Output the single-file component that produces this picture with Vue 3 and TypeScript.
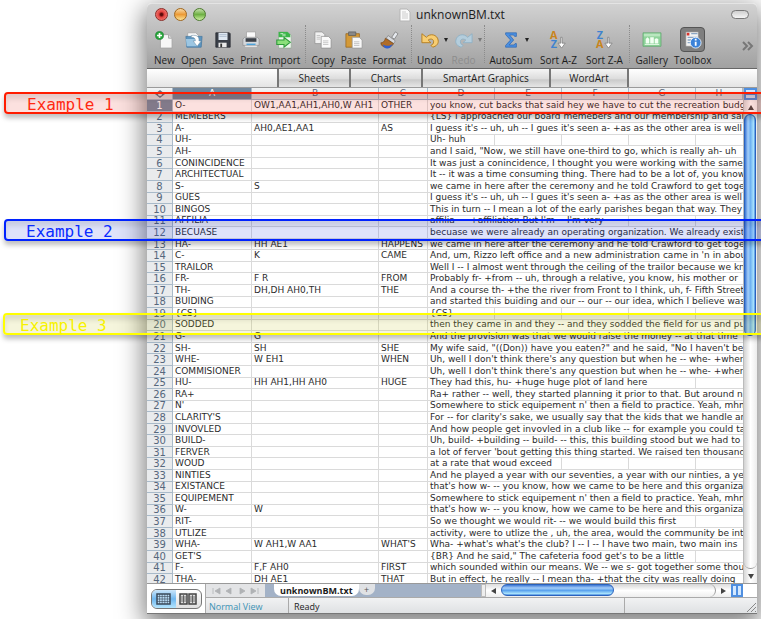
<script setup lang="ts">
interface Tool {
  name: string
  icon: string
  menu?: boolean
  disabled?: boolean
  pressed?: boolean
  roomy?: boolean
}

interface Row {
  n: number
  a: string
  b: string
  c: string
  text: string
  span: number
}

const icons: Record<string, string> = {
  new: '<path d="M6 4h9l4 4v11H6z" fill="#f6f6f6" stroke="#a4a4a4"/><path d="M15 4v4h4" fill="#ddd" stroke="#a4a4a4"/><circle cx="5" cy="5" r="4.500" fill="#27a53a" stroke="#14772a" stroke-width=".6"/><path d="M5 2.200v5.600M2.200 5h5.600" stroke="#fff" stroke-width="1.800"/>',
  open: '<path d="M3 5V2h9l3 3v3H3z" fill="#f7f7f7" stroke="#999" stroke-width=".7"/><path d="M1 6h18l-1 12H2z" fill="#5d95bf" stroke="#44779f" stroke-width=".8"/><path d="M1 9h12l1 8H2z" fill="#9cc6e2"/><path d="M7 5c7-1 9 2 8.500 6H18l-4.500 6L9 11h2.500c0-3-1.500-4-4.500-4z" fill="#fff" stroke="#6b8ba3" stroke-width=".6"/>',
  save: '<path d="M2 2h15l1 1v15H2z" fill="#3a3f48" stroke="#23262c" stroke-width=".8"/><path d="M5 2h10v8H5z" fill="#dfe8f2"/><path d="M6 4h8M6 6h8" stroke="#9fb0c4" stroke-width=".8"/><path d="M5 13h9v5H5z" fill="#e9e9e9"/><path d="M7 14h2v4H7z" fill="#333"/>',
  print: '<path d="M5 1h10v9H5z" fill="#fafafa" stroke="#999" stroke-width=".7"/><path d="M1 9l2-2h14l2 2v7H1z" fill="#d5d8db" stroke="#888" stroke-width=".7"/><path d="M4 8h12v4H4z" fill="#3c4148"/><path d="M5 14h10v2H5z" fill="#4aa3dd"/><path d="M3 16h14v2H3z" fill="#f2f2f2" stroke="#999" stroke-width=".5"/>',
  import: '<path d="M4 1h10l4 4v14H4z" fill="#eef8ee" stroke="#8fa890" stroke-width=".7"/><path d="M4 1h10l3 3v3H4z" fill="#3cb54a"/><path d="M6 3h3v3M11 3v3" stroke="#dff5df" fill="none"/><path d="M2 10h8V7l7 5.500-7 5.500v-3H2z" fill="#8be07a" stroke="#2f9a3c" stroke-width="1.200"/>',
  copy: '<path d="M1 1h8l3 3v10H1z" fill="#f1f1f1" stroke="#8e8e8e" stroke-width=".8"/><path d="M8 6h8l3 3v10H8z" fill="#fafafa" stroke="#8e8e8e" stroke-width=".8"/><path d="M3 5h4M3 7h4M3 9h4M10 11h6M10 13h6M10 15h6" stroke="#b5b5b5" stroke-width=".8"/>',
  paste: '<path d="M1 3h15v15H1z" fill="#d49a38" stroke="#97631a" stroke-width=".8"/><path d="M4 1h8v4H4z" fill="#888" stroke="#555" stroke-width=".7"/><path d="M8 7h8l3 3v9H8z" fill="#f8f8f8" stroke="#949494" stroke-width=".8"/><path d="M10 12h6M10 14h6M10 16h6" stroke="#b0b0b0" stroke-width=".8"/>',
  format: '<path d="M13 7l4-6 3 2-4 6z" fill="#e6e9ee" stroke="#777" stroke-width=".8"/><path d="M9 5l8 6-2 3-8-6z" fill="#d6d9de" stroke="#777" stroke-width=".7"/><path d="M6 8l9 6c-2 4-7 6-12 3-1-1-2-2-2-4 2 0 4-1 5-5z" fill="#b06d28" stroke="#6e3f12" stroke-width=".7"/><path d="M3 15c4 2 8 2 11-.5-1 3-3 5-6 5s-4-2-5-4.500z" fill="#2f5fd0"/>',
  undo: '<path d="M1 3v10h10l-3-3c3-2 6-1 6 2 0 2-1 3-3 4l2 2c4-1 7-4 6-8-1-6-9-8-13-3z" fill="#f7cd72" stroke="#b27a1c" stroke-width="1"/>',
  redo: '<path d="M19 3v10H9l3-3c-3-2-6-1-6 2 0 2 1 3 3 4l-2 2c-4-1-7-4-6-8 1-6 9-8 13-3z" fill="#b4cddc" stroke="#8fb0c4" stroke-width="1"/>',
  sum: '<path d="M4 2h12v4h-2l-1-1.500H8.500l4.500 5.500-5 5.500h5.500L14.500 14H16v4H4v-2l5.500-6L4 4z" fill="#4b8fe0" stroke="#2560ad" stroke-width=".7"/>',
  az: '<text x="1" y="9" fill="#c9841c">A</text><text x="2" y="19" fill="#3f82cf">Z</text><path d="M14.500 7v6.500H18L14 19l-4-5.500h3V7z" fill="#fff" stroke="#777" stroke-width=".8"/>',
  za: '<text x="2" y="9" fill="#3f82cf">Z</text><text x="1" y="19" fill="#c9841c">A</text><path d="M15.500 7v6.500H19L15 19l-4-5.500h3V7z" fill="#fff" stroke="#777" stroke-width=".8"/>',
  gallery: '<path d="M0 2h20v15H0z" fill="#8ed39a" stroke="#5da66b" stroke-width=".8"/><path d="M1 3h18v3H1z" fill="#b9e6bf"/><path d="M3 9l2-2 2 2v5H3zM8 7h4v7H8zM13 9l2-1 2 1v5h-4z" fill="#f2fff2"/><path d="M2 15h16" stroke="#e6f8e6"/>',
  toolbox: '<path d="M2 1h14v16H2z" fill="#f3f3f3" stroke="#888" stroke-width=".7"/><path d="M3 2h3v3H3z" fill="#d8342c"/><path d="M8 3h7M4 7h11M4 10h5M4 13h4" stroke="#8aa6c4" stroke-width="1.400"/><circle cx="13" cy="13" r="6" fill="#3b82d8" stroke="#e9f2fc"/><path d="M13 12v4.500M13 8.700v1.800" stroke="#fff" stroke-width="2"/>'
}

const groups: Tool[][] = [
  [
    { name: 'New', icon: 'new' },
    { name: 'Open', icon: 'open' },
    { name: 'Save', icon: 'save' },
    { name: 'Print', icon: 'print' },
    { name: 'Import', icon: 'import' }
  ],
  [
    { name: 'Copy', icon: 'copy' },
    { name: 'Paste', icon: 'paste' },
    { name: 'Format', icon: 'format' }
  ],
  [
    { name: 'Undo', icon: 'undo', menu: true },
    { name: 'Redo', icon: 'redo', menu: true, disabled: true }
  ],
  [
    { name: 'AutoSum', icon: 'sum', menu: true },
    { name: 'Sort A-Z', icon: 'az', roomy: true },
    { name: 'Sort Z-A', icon: 'za', roomy: true }
  ],
  [
    { name: 'Gallery', icon: 'gallery' },
    { name: 'Toolbox', icon: 'toolbox', pressed: true }
  ]
]

const columns = ['A', 'B', 'C', 'D', 'E', 'F', 'G', 'H']

// Word, pronunciation, replacement, sentence, and how many columns the sentence spills over.
const source: [string, string, string, string, number?][] = [
  ['O-', 'OW1,AA1,AH1,AH0,W AH1', 'OTHER', 'you know, cut backs that said hey we have to cut the recreation budget'],
  ['MEMEBERS', '', '', '{LS} I approached our board memebers and our membership and said'],
  ['A-', 'AH0,AE1,AA1', 'AS', "I guess it's -- uh, uh -- I gues it's seen a- +as as the other area is well"],
  ['UH-', '', '', 'Uh- huh', 1],
  ['AH-', '', '', 'and I said, "Now, we still have one-third to go, which is really ah- uh'],
  ['CONINCIDENCE', '', '', 'It was just a conincidence, I thought you were working with the same'],
  ['ARCHITECTUAL', '', '', 'It -- it was a time consuming thing. There had to be a lot of, you know'],
  ['S-', 'S', '', 'we came in here after the ceremony and he told Crawford to get together'],
  ['GUES', '', '', "I guess it's -- uh, uh -- I gues it's seen a- +as as the other area is well"],
  ['BINGOS', '', '', 'This in turn -- I mean a lot of the early parishes began that way. They'],
  ['AFFILIA', '', '', "affilia- -- +affiliation But I'm -- I'm very", 3],
  ['BECUASE', '', '', 'becuase we were already an operating organization. We already existed'],
  ['HA-', 'HH AE1', 'HAPPENS', 'we came in here after the ceremony and he told Crawford to get together'],
  ['C-', 'K', 'CAME', "And, um, Rizzo left office and a new administration came in 'n in about"],
  ['TRAILOR', '', '', 'Well I -- I almost went through the ceiling of the trailor because we knew'],
  ['FR-', 'F R', 'FROM', 'Probably fr- +from -- uh, through a relative, you know, his mother or'],
  ['TH-', 'DH,DH AH0,TH', 'THE', 'And a course th- +the the river from Front to I think, uh, f- Fifth Street'],
  ['BUIDING', '', '', 'and started this buiding and our -- our -- our idea, which I believe was'],
  ['{CS}', '', '', '{CS}', 1],
  ['SODDED', '', '', 'then they came in and they -- and they sodded the field for us and put'],
  ['G-', 'G', '', 'And the provision was that we would raise the money -- at that time'],
  ['SH-', 'SH', 'SHE', 'My wife said, "((Don)) have you eaten?" and he said, "No I haven\'t been'],
  ['WHE-', 'W EH1', 'WHEN', "Uh, well I don't think there's any question but when he -- whe- +when"],
  ['COMMISIONER', '', '', "Uh, well I don't think there's any question but when he -- whe- +when"],
  ['HU-', 'HH AH1,HH AH0', 'HUGE', 'They had this, hu- +huge huge plot of land here', 4],
  ['RA+', '', '', 'Ra+ rather -- well, they started planning it prior to that. But around nine'],
  ["N'", '', '', "Somewhere to stick equipement n' then a field to practice. Yeah, mhm"],
  ["CLARITY'S", '', '', "For -- for clarity's sake, we usually say that the kids that we handle are"],
  ['INVOVLED', '', '', 'And how people get invovled in a club like -- for example you could take'],
  ['BUILD-', '', '', 'Uh, build- +building -- build- -- this, this building stood but we had to'],
  ['FERVER', '', '', "a lot of ferver 'bout getting this thing started. We raised ten thousand"],
  ['WOUD', '', '', 'at a rate that woud exceed', 2],
  ['NINTIES', '', '', 'And he played a year with our seventies, a year with our ninties, a year'],
  ['EXISTANCE', '', '', "that's how w- -- you know, how we came to be here and this organization"],
  ['EQUIPEMENT', '', '', "Somewhere to stick equipement n' then a field to practice. Yeah, mhm"],
  ['W-', 'W', '', "that's how w- -- you know, how we came to be here and this organization"],
  ['RIT-', '', '', 'So we thought we would rit- -- we would build this first', 4],
  ['UTLIZE', '', '', 'activity, were to utlize the , uh, the area, would the community be into'],
  ['WHA-', 'W AH1,W AA1', "WHAT'S", "Wha- +what's what's the club? I -- I -- I have two main, two main ins"],
  ["GET'S", '', '', '{BR} And he said," The cafeteria food get\'s to be a little', 4],
  ['F-', 'F,F AH0', 'FIRST', 'which sounded within our means. We -- we s- got together some thou'],
  ['THA-', 'DH AE1', 'THAT', 'But in effect, he really -- I mean tha- +that the city was really doing']
]

const rows: Row[] = source.map(([a, b, c, text, span], i) => ({ n: i + 1, a, b, c, text, span: span ?? 5 }))

const notes = [
  { label: 'Example 1', kind: 'red' },
  { label: 'Example 2', kind: 'blue' },
  { label: 'Example 3', kind: 'yellow' }
]
</script>

<template>
  <main class="page">
    <section class="window">
      <header class="chrome">
        <div class="titlebar">
          <div class="lights">
            <button class="light close" aria-label="Close"></button>
            <button class="light minimise" aria-label="Minimise"></button>
            <button class="light grow" aria-label="Zoom"></button>
          </div>
          <h1 class="title">
            <svg width="12" height="14" viewBox="0 0 12 14"><path d="M1 1h7l3 3v9H1z" fill="#fafafa" stroke="#b5b5b5" /><path d="M3 4h4M3 6h6M3 8h6M3 10h6" stroke="#ccc" /></svg>
            unknownBM.txt
          </h1>
          <button class="pill" aria-label="Toggle toolbar"></button>
        </div>
        <nav class="toolbar">
          <template v-for="(group, g) in groups" :key="g">
            <span v-if="g" class="rule"></span>
            <button
              v-for="tool in group"
              :key="tool.name"
              class="tool"
              :class="{ dropdown: tool.menu && tool.name !== 'AutoSum', off: tool.disabled, roomy: tool.roomy }"
              :disabled="tool.disabled"
            >
              <span class="glyph" :class="{ pressed: tool.pressed }">
                <svg width="20" height="20" viewBox="0 0 20 20" v-html="icons[tool.icon]"></svg>
                <i v-if="tool.menu" class="caret"></i>
              </span>
              {{ tool.name }}
            </button>
          </template>
          <button class="more" aria-label="More tools">
            <svg width="12" height="10" viewBox="0 0 12 10"><path d="M1 1l4 4-4 4M6 1l4 4-4 4" fill="none" stroke="#777" stroke-width="2" /></svg>
          </button>
        </nav>
      </header>

      <nav class="elements">
        <button>Sheets</button>
        <button>Charts</button>
        <button class="wide">SmartArt Graphics</button>
        <button>WordArt</button>
      </nav>

      <div class="body">
        <div class="sheet">
          <table>
            <colgroup>
              <col class="w-num" /><col class="w-a" /><col class="w-b" /><col class="w-c" />
              <col class="w-d" /><col class="w-d" /><col class="w-d" /><col class="w-d" /><col />
            </colgroup>
            <thead>
              <tr>
                <th class="corner"><svg width="12" height="8" viewBox="0 0 12 8"><path d="M1 4l5-4 5 4-5 4z" fill="#657487" /><circle cx="6" cy="4" r="2" fill="#e9ebed" /></svg></th>
                <th v-for="col in columns" :key="col" :class="{ picked: col === 'A' }">{{ col }}</th>
              </tr>
            </thead>
            <tbody>
              <tr v-for="row in rows" :key="row.n">
                <th :class="{ picked: row.n === 1 }">{{ row.n }}</th>
                <td>{{ row.a }}</td>
                <td>{{ row.b }}</td>
                <td>{{ row.c }}</td>
                <td :colspan="row.span">{{ row.text }}</td>
                <td v-for="k in 5 - row.span" :key="k"></td>
              </tr>
            </tbody>
          </table>
        </div>
        <div class="vscroll">
          <span class="split"></span>
          <button class="arrow" aria-label="Scroll up"><i class="tri up"></i></button>
          <div class="vtrack"><span class="vthumb"></span></div>
          <button class="arrow" aria-label="Scroll down"><i class="tri down"></i></button>
        </div>
      </div>

      <footer class="foot">
        <div class="views">
          <div class="switch">
            <button class="on" aria-label="Normal view">
              <svg width="15" height="12" viewBox="0 0 15 12"><path d="M1 1h13v10H1z" fill="#b9dcf5" stroke="#3b4a5a" stroke-width="1.500" /><path d="M1 3.500h13M1 6h13M1 8.500h13M3.600 1v10M6.200 1v10M8.800 1v10M11.400 1v10" stroke="#3b4a5a" stroke-width=".6" /></svg>
            </button>
            <button aria-label="Page layout view">
              <svg width="18" height="12" viewBox="0 0 18 12"><path d="M1 1h7v10H1zM10 1h7v10h-7z" fill="#ddd" stroke="#444" stroke-width="1.500" /><path d="M2 4h5M2 6h5M2 8h5M11 4h5M11 6h5M11 8h5M4.500 2v8M13.500 2v8" stroke="#444" stroke-width=".7" /></svg>
            </button>
          </div>
        </div>
        <div class="bars">
          <div class="tabs">
            <div class="steps">
              <svg width="48" height="8" viewBox="0 0 48 8"><path d="M1 1v6M8 1v6L3 4zM19 1v6l-5-3zM28 1v6l5-3zM39 1v6l5-3zM46 1v6" fill="#b0b2b5" stroke="#b0b2b5" stroke-width=".8" /></svg>
            </div>
            <div class="tabstrip">
              <button class="tab">unknownBM.txt</button>
              <button class="add" aria-label="Add sheet">+</button>
            </div>
            <span class="grip"></span>
            <div class="hscroll">
              <i class="tri left"></i>
              <div class="htrack"><span class="hthumb"></span></div>
              <i class="tri right"></i>
            </div>
            <span class="colsplit"></span>
            <span class="blank"></span>
          </div>
          <div class="status">
            <span class="mode">Normal View</span>
            <span class="ready">Ready</span>
            <span class="last">
              <svg width="11" height="11" viewBox="0 0 11 11"><path d="M1 10l9-9M5 10l5-5M9 10l1-1" stroke="#888" /></svg>
            </span>
          </div>
        </div>
      </footer>
    </section>

    <div v-for="note in notes" :key="note.kind" class="note" :class="note.kind">{{ note.label }}</div>
  </main>
</template>

<style>
body {
  margin: 0;
  background: #fff;
}
</style>

<style scoped>
* {
  box-sizing: border-box;
}
button {
  margin: 0;
  padding: 0;
  border: 0;
  background: none;
  font: inherit;
  color: inherit;
}
.page {
  position: relative;
  display: flex;
  height: 100vh;
  padding: 3px 4px 5px 147px;
  overflow: hidden;
  font: 10px/12px "Open Sans", "Noto Sans", sans-serif;
  color: #1c1c1c;
}
.window {
  display: flex;
  flex-direction: column;
  flex: 1;
  min-width: 0;
  border-radius: 5px 5px 0 0;
  background: #fff;
  box-shadow: 0 8px 26px 3px rgba(0, 0, 0, 0.52);
}
.chrome {
  border-radius: 5px 5px 0 0;
  border-top: 1px solid #e4e4e4;
  border-bottom: 1px solid #666;
  background: linear-gradient(#d2d2d2, #a1a1a1);
}
.titlebar {
  display: grid;
  grid-template-columns: 1fr auto 1fr;
  align-items: center;
  height: 21px;
  padding: 0 8px;
}
.lights {
  display: flex;
  gap: 6px;
}
.light {
  width: 13px;
  height: 13px;
  border: 1px solid #555;
  border-radius: 50%;
}
.close {
  border-color: #8d2b26;
  background: radial-gradient(circle at 50% 50%, #5d0b0b 15%, #e2403c 35%, #f59a92);
}
.minimise {
  border-color: #a1671c;
  background: linear-gradient(#f8d9a5, #ec9a35 50%, #fbe597);
}
.grow {
  border-color: #4d7a2f;
  background: linear-gradient(#c4dfa9, #6eb043 50%, #cdf0a0);
}
.title {
  display: flex;
  align-items: center;
  gap: 5px;
  margin: 0;
  font-size: 12px;
  font-weight: 400;
  line-height: 16px;
}
.pill {
  justify-self: end;
  width: 18px;
  height: 9px;
  border: 1px solid #777;
  border-radius: 5px;
  background: linear-gradient(#cfcfcf, #f4f4f4);
}
.toolbar {
  display: flex;
  gap: 6px;
  height: 43px;
  padding: 0 3px 0 7px;
}
.tool {
  display: flex;
  flex-direction: column;
  align-items: center;
  white-space: nowrap;
}
.dropdown {
  margin-right: 3px;
}
.roomy {
  min-width: 40px;
}
.off {
  color: #8d8d8d;
}
.glyph {
  position: relative;
  display: flex;
  align-items: center;
  justify-content: center;
  width: 25px;
  height: 25px;
  margin: 2px 0 2px;
}
.tool .glyph {
  margin-left: -4px;
  margin-right: -4px;
}
.glyph svg {
  width: 18px;
  height: 18px;
  overflow: visible;
  font: bold 12px "Open Sans", sans-serif;
}
.pressed {
  border: 1px solid #555;
  border-radius: 4px;
  background: #7f7f7f;
}
.caret {
  position: absolute;
  top: 11px;
  left: 27px;
  border: 2px solid transparent;
  border-top: 4px solid #222;
  border-bottom: 0;
}
.off .caret {
  border-top-color: #777;
}
.rule {
  height: 38px;
  margin: 0 -1px;
  border-left: 1px dotted #8b8b8b;
}
.more {
  align-self: center;
  margin-left: auto;
}
.elements {
  display: flex;
  height: 19px;
  padding-left: 130px;
  border-bottom: 1px solid #9a9a9a;
  background: linear-gradient(#fff, #e4e4e4);
}
.elements button {
  width: 72px;
  border-left: 2px solid #777;
  background: linear-gradient(#f5f5f5, #dcdcdc 55%, #cacaca 60%, #e6e6e6);
}
.elements .wide {
  width: 128px;
}
.elements button:last-child {
  width: 80px;
  border-right: 2px solid #777;
}
.body {
  display: flex;
  flex: 1;
  min-height: 0;
}
.sheet {
  flex: 1;
  min-width: 0;
  overflow: hidden;
}
table {
  width: 100%;
  height: calc(100% + 3px);
  border-spacing: 0;
  table-layout: fixed;
  font: 9px/9px "DejaVu Sans", Verdana, sans-serif;
  color: #2b2b2b;
}
.w-num {
  width: 26px;
}
.w-a {
  width: 79px;
}
.w-b {
  width: 127px;
}
.w-c {
  width: 49px;
}
.w-d {
  width: 67px;
}
th,
td {
  padding: 0;
  border-right: 1px solid #dadada;
  border-bottom: 1px solid #dadada;
  overflow: hidden;
  white-space: nowrap;
}
td {
  padding-left: 2px;
  text-align: left;
}
td:last-child {
  border-right: 0;
}
th {
  border-color: #a9bac9;
  background: #e9ebed;
  color: #56677c;
  font-weight: 400;
}
tbody th {
  font-size: 10px;
}
thead th {
  height: 12px;
  background: linear-gradient(#f2f3f4, #dfe2e5);
}
th.picked {
  background: #72879d;
  color: #fff;
}
.corner svg {
  display: block;
  margin: 0 auto;
}
.vscroll {
  display: flex;
  flex-direction: column;
  width: 14px;
  border-left: 1px solid #bbb;
  background: linear-gradient(90deg, #d8d8d8, #fff 50%, #eee);
}
.split {
  height: 12px;
  border: 2px solid #4f8fe0;
  background: linear-gradient(#d3e8ff 40%, #4f8fe0 40%, #4f8fe0 60%, #d3e8ff 60%);
}
.arrow {
  display: flex;
  align-items: center;
  justify-content: center;
  height: 14px;
}
.tri {
  border: 3px solid transparent;
}
.up {
  border-bottom: 5px solid #444;
  border-top: 0;
}
.down {
  border-top: 5px solid #444;
  border-bottom: 0;
}
.left {
  border-right: 5px solid #444;
  border-left: 0;
}
.right {
  border-left: 5px solid #444;
  border-right: 0;
}
.vtrack {
  flex: 1;
  border-bottom: 1px solid #999;
  border-radius: 0 0 7px 7px;
  background: linear-gradient(90deg, #d2d2d2, #fff 50%, #ececec);
}
.vthumb {
  display: block;
  width: 12px;
  height: 49%;
  border: 1px solid #2a62bd;
  border-radius: 6px;
  background: linear-gradient(90deg, #3c78d6, #a4cdf8 30%, #6fb2f2 55%, #a6e0fc 85%, #4b8de0);
}
.foot {
  display: flex;
  height: 31px;
  border-top: 1px solid #999;
  border-bottom: 1px solid #777;
}
.views {
  display: flex;
  align-items: center;
  justify-content: center;
  width: 59px;
  border-right: 1px solid #aaa;
}
.switch {
  display: flex;
  width: 51px;
  height: 20px;
  border: 1px solid #777;
  border-radius: 6px;
  overflow: hidden;
  background: linear-gradient(#fff, #e0e0e0);
}
.switch button {
  display: flex;
  flex: 1;
  align-items: center;
  justify-content: center;
}
.switch .on {
  background: linear-gradient(#cbe6fb, #6fb7ef 50%, #b5e6ff);
}
.bars {
  display: flex;
  flex-direction: column;
  flex: 1;
  min-width: 0;
}
.tabs {
  display: flex;
  height: 14px;
}
.steps {
  display: flex;
  align-items: center;
  justify-content: center;
  width: 59px;
  background: #e3e4e6;
}
.tabstrip {
  display: flex;
  flex: 1;
  align-items: flex-start;
  padding-left: 9px;
  background: #a3b2c7;
  font-size: 9px;
  line-height: 11px;
}
.tab {
  height: 12px;
  padding: 0 6px;
  border-radius: 0 0 7px 7px;
  background: #fff;
  font-weight: 700;
  white-space: nowrap;
}
.add {
  width: 16px;
  height: 11px;
  border-radius: 0 0 7px 7px;
  background: #e0e2e5;
  color: #555;
}
.grip {
  width: 5px;
  border: 1px solid #bbb;
  background: #eee;
}
.hscroll {
  display: flex;
  align-items: center;
  gap: 5px;
  width: 245px;
  padding: 0 5px;
  background: linear-gradient(#ddd, #fff 50%, #eee);
}
.htrack {
  flex: 1;
  height: 13px;
  border-right: 1px solid #999;
  border-radius: 7px;
  background: linear-gradient(#d5d5d5, #fff 50%, #eee);
}
.hthumb {
  display: block;
  width: 53%;
  height: 12px;
  border: 1px solid #2a62bd;
  border-radius: 6px;
  background: linear-gradient(#3c78d6, #a4cdf8 30%, #5ba3ee 55%, #a6e0fc 85%, #4b8de0);
}
.colsplit {
  width: 12px;
  border: 2px solid #4f8fe0;
  background: linear-gradient(90deg, #d3e8ff 40%, #4f8fe0 40%, #4f8fe0 60%, #d3e8ff 60%);
}
.blank {
  width: 14px;
}
.status {
  display: flex;
  flex: 1;
  border-top: 1px solid #aaa;
  background: linear-gradient(#f1f2f3, #dfe1e3);
  font-size: 9px;
}
.mode {
  width: 83px;
  padding: 3px 0 0 3px;
  border-right: 1px solid #aaa;
  color: #3c93b5;
}
.ready {
  flex: 1;
  padding: 3px 0 0 5px;
}
.last {
  display: flex;
  align-items: flex-end;
  justify-content: flex-end;
  width: 133px;
  border-left: 1px solid #aaa;
}
.note {
  position: absolute;
  right: -8px;
  height: 22px;
  border: 2px solid;
  border-radius: 4px;
  box-shadow: 0 4px 5px rgba(0, 0, 0, 0.25), inset 0 5px 5px rgba(0, 0, 0, 0.1);
  font: 16px/21px "DejaVu Sans Mono", monospace;
}
.red {
  top: 92px;
  left: 4px;
  padding-left: 21px;
  border-color: #ff1c00;
  background: rgba(235, 40, 30, 0.14);
  color: #ff2a12;
}
.blue {
  top: 219px;
  left: 4px;
  padding-left: 20px;
  border-color: #0022ff;
  background: rgba(30, 60, 220, 0.14);
  color: #0a2cff;
}
.yellow {
  top: 313px;
  left: 3px;
  padding-left: 15px;
  border-color: #ffff00;
  background: rgba(190, 190, 40, 0.16);
  color: #f7f200;
}
</style>
